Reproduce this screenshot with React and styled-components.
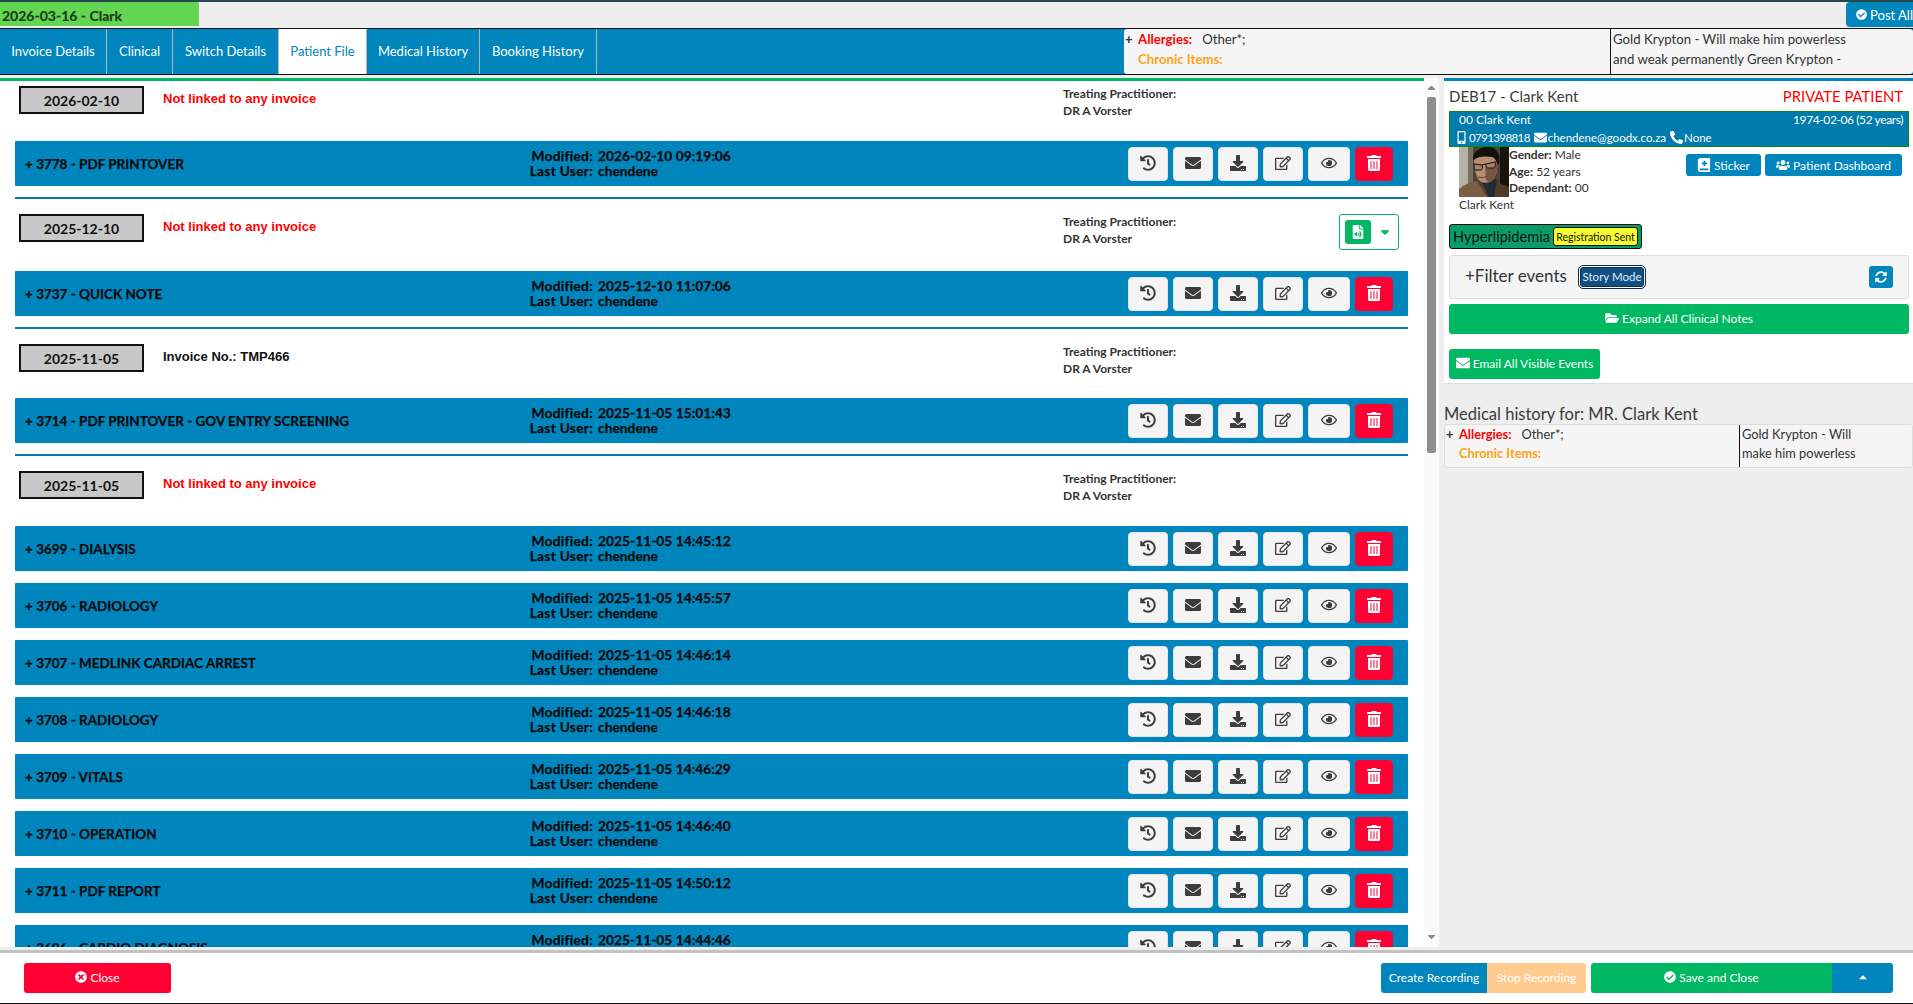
import styled, { createGlobalStyle } from "styled-components";
import {
  FaCaretDown,
  FaCaretUp,
  FaCheckCircle,
  FaBookMedical,
  FaDownload,
  FaEnvelope,
  FaFileAudio,
  FaFolderOpen,
  FaHistory,
  FaMobileAlt,
  FaPhoneAlt,
  FaRegEdit,
  FaRegEye,
  FaSyncAlt,
  FaTimesCircle,
  FaTrashAlt,
  FaUsers,
} from "react-icons/fa";

const BLUE = "#0086bd";
const GREEN = "#00b862";
const RED = "#ff0033";
const BODY_FONT = '"Lato", "Noto Sans", sans-serif';

const GlobalStyle = createGlobalStyle`
  html, body {
    margin: 0;
    padding: 0;
    background: #eeeeee;
    font-family: ${BODY_FONT};
    color: #333;
  }
  * {
    box-sizing: border-box;
  }
`;

const Page = styled.div`
  height: 100vh;
  display: flex;
  flex-direction: column;
  overflow: hidden;
  border-top: 2px solid #25484a;
`;

const TopBar = styled.div`
  height: 26px;
  flex: none;
  display: flex;
  justify-content: space-between;
  background: #eeeeee;
`;

const DateChip = styled.div`
  width: 199px;
  height: 24px;
  background: #62d650;
  color: #1c3a1c;
  font-weight: 700;
  font-size: 14px;
  line-height: 24px;
  padding: 2px 0 0 2px;
  border-top-right-radius: 2px;
  -webkit-text-stroke: 0.2px #1c3a1c;
`;

const PostAll = styled.button`
  width: 67px;
  height: 25px;
  border: 0;
  padding: 0 0 0 10px;
  display: flex;
  align-items: center;
  gap: 3px;
  background: ${BLUE};
  color: #fff;
  font: 400 13px ${BODY_FONT};
  white-space: nowrap;
  overflow: hidden;
  border-top-left-radius: 4px;
  border-bottom-left-radius: 4px;
`;

const TabBar = styled.div`
  height: 47px;
  flex: none;
  display: flex;
  background: ${BLUE};
  border-top: 1px solid #111;
  border-bottom: 1px solid #111;
`;

const Tab = styled.div`
  width: ${(p) => p.$w}px;
  display: flex;
  align-items: center;
  justify-content: center;
  padding-bottom: 2px;
  font-size: 13px;
  color: ${(p) => (p.$active ? BLUE : "#fff")};
  background: ${(p) => (p.$active ? "#fff" : "transparent")};
  border-right: 1px solid #b4b4b4;
`;

const TabSpacer = styled.div`
  flex: 1;
`;

const InfoBox = styled.div`
  display: grid;
  grid-template-columns: ${(p) => (p.$compact ? "294px 1fr" : "486px 1fr")};
  background: #f5f5f5;
  color: #333;
  font-size: ${(p) => (p.$compact ? "12.8px" : "13.2px")};
  line-height: ${(p) => (p.$compact ? "19px" : "20px")};
  border-radius: 3px;
  border: ${(p) => (p.$compact ? "1px solid #ddd" : "0")};
  width: ${(p) => (p.$compact ? "469px" : "789px")};
  height: ${(p) => (p.$compact ? "44px" : "auto")};
`;

const InfoLeft = styled.div`
  padding-left: 1px;
`;

const InfoLine = styled.div`
  display: flex;
  padding-left: ${(p) => (p.$indent ? "13px" : "0")};
`;

const InfoPlus = styled.b`
  width: 12px;
  margin-right: 1px;
`;

const InfoLabel = styled.b`
  color: ${(p) => p.$color};
  font-weight: 700;
`;

const InfoValue = styled.span`
  padding-left: 10px;
`;

const InfoRight = styled.div`
  border-left: 1px solid #111;
  padding-left: 2px;
  white-space: nowrap;
  overflow: hidden;
`;

const Main = styled.div`
  flex: 1;
  min-height: 0;
  display: flex;
  gap: 5px;
  padding-top: 3px;
`;

const FilePanel = styled.div`
  width: 1439px;
  flex: none;
  display: flex;
  background: #fff;
  overflow: hidden;
`;

const FileList = styled.div`
  width: 1424px;
  flex: none;
  padding: 0 16px 0 15px;
  border-top: 3px solid ${GREEN};
  overflow: hidden;
`;

const ScrollTrack = styled.div`
  flex: 1;
  display: flex;
  flex-direction: column;
  align-items: center;
  padding-top: 3px;
  color: #8d8d8d;
  font-size: 13px;
  background: #fafafa;
`;

const ScrollThumb = styled.div`
  width: 9px;
  height: 356px;
  margin-top: 3px;
  border-radius: 2px;
  background: #8d8d8d;
`;

const ScrollDown = styled.div`
  margin-top: auto;
  padding-bottom: 1px;
`;

const SectionHead = styled.div`
  height: ${(p) => p.$h}px;
  padding: ${(p) => p.$top}px 9px 0 4px;
  display: grid;
  grid-template-columns: 125px 1fr 276px 60px;
`;

const DateBox = styled.div`
  width: 125px;
  height: 28px;
  border: 2px solid #111;
  background: #c8c8c8;
  color: #111;
  font-weight: 700;
  font-size: 14px;
  display: flex;
  align-items: center;
  justify-content: center;
`;

const LinkNote = styled.div`
  padding: 5px 0 0 19px;
  font: 700 13px/16px "Liberation Sans", sans-serif;
  color: ${(p) => (p.$linked ? "#111" : "#f00")};
`;

const Practitioner = styled.div`
  font-size: 12px;
  font-weight: 700;
  color: #333;
  line-height: 16.5px;
`;

const AudioButton = styled.div`
  width: 60px;
  height: 36px;
  border: 1px solid ${GREEN};
  border-radius: 3px;
  background: #fff;
  display: flex;
  align-items: center;
  padding-left: 5px;
  gap: 7px;
  color: ${GREEN};
  font-size: 14px;
`;

const AudioIcon = styled.span`
  width: 26px;
  height: 24px;
  border-radius: 3px;
  background: ${GREEN};
  color: #fff;
  display: flex;
  align-items: center;
  justify-content: center;
  font-size: 14px;
`;

const Row = styled.div`
  height: 45px;
  margin-bottom: ${(p) => (p.$last ? "11px" : "12px")};
  padding-right: 15px;
  background: ${BLUE};
  display: grid;
  grid-template-columns: 1fr 430px 265px;
  align-items: center;
  color: #0a0a0a;
  font-weight: 700;
  font-size: 13.5px;
  border-radius: 1px;
  box-shadow: 0 0 1px #bbb;
  -webkit-text-stroke: 0.25px #0a0a0a;
`;

const RowTitle = styled.div`
  padding-left: 10px;
`;

const RowMeta = styled.div`
  display: grid;
  grid-template-columns: 68px auto;
  justify-content: start;
  column-gap: 5px;
  line-height: 15px;
  font-size: 13.8px;
  margin: -2px 0 0 -173px;
`;

const MetaKey = styled.span`
  text-align: right;
  white-space: nowrap;
  letter-spacing: 0.25px;
`;

const RowActions = styled.div`
  display: flex;
  gap: 5px;
`;

const ActionButton = styled.button`
  width: ${(p) => p.$w || 40}px;
  height: 34px;
  padding: 0 0 1px;
  border: 1px solid ${(p) => (p.$danger ? RED : "#e4e4e4")};
  border-radius: 4px;
  background: ${(p) => (p.$danger ? RED : "#f4f4f4")};
  color: ${(p) => (p.$danger ? "#fff" : "#3d3d3d")};
  font-size: 16px;
  display: flex;
  align-items: center;
  justify-content: center;
`;

const Rule = styled.div`
  height: 2px;
  background: #007bad;
`;

const SidePanel = styled.div`
  flex: 1;
  min-width: 0;
`;

const PatientCard = styled.div`
  height: 306px;
  background: #fff;
  border-top: 3px solid ${BLUE};
  padding: 0 4px 0 5px;
  border-bottom: 1px solid #ddd;
`;

const CardHead = styled.div`
  height: 30px;
  padding-top: 5px;
  display: flex;
  justify-content: space-between;
  font-size: 15px;
  line-height: 20px;
  color: #3a3a3a;
  padding-right: 6px;
`;

const PrivateTag = styled.span`
  color: #f00;
  font-size: 14.8px;
`;

const PatientStrip = styled.div`
  height: 36px;
  background: #007bad;
  border: 1px solid #0a8a0a;
  color: #fff;
  font-size: 12px;
  padding: 0 5px;
  display: grid;
  grid-auto-rows: 17px;
  align-content: center;
`;

const StripLine = styled.div`
  display: flex;
  justify-content: space-between;
  padding-left: ${(p) => p.$indent || 0}px;
`;

const StripDate = styled.span`
  letter-spacing: -0.4px;
`;

const Contacts = styled.div`
  display: flex;
  gap: 4px;
  align-items: center;
  white-space: nowrap;
  font-size: 11.5px;

  svg {
    font-size: 13px;
  }
`;

const ContactItem = styled.span`
  display: inline-flex;
  gap: 1px;
  align-items: center;
`;

const PhoneNumber = styled.span`
  letter-spacing: -0.6px;
`;

const PatientBody = styled.div`
  height: 77px;
  display: flex;
  padding-left: 10px;
`;

const PhotoColumn = styled.div`
  width: 50px;
  font-size: 12px;
  white-space: nowrap;
  line-height: 16px;
`;

const PhotoSvg = styled.svg`
  display: block;
  width: 50px;
  height: 50px;
`;

const Demographics = styled.div`
  flex: 1;
  font-size: 12px;
  line-height: 16.5px;
`;

const DemoKey = styled.b`
  font-weight: 700;
`;

const PatientButtons = styled.div`
  display: flex;
  gap: 4px;
  padding: 7px 7px 0 0;
`;

const SmallButton = styled.button`
  height: 22px;
  width: ${(p) => p.$w}px;
  padding: 0;
  border: 0;
  border-radius: 3px;
  background: ${BLUE};
  color: #fff;
  font: 400 12px ${BODY_FONT};
  display: flex;
  align-items: center;
  justify-content: center;
  gap: 3px;

  svg {
    font-size: 14px;
  }
`;

const ConditionBar = styled.div`
  width: 193px;
  height: 25px;
  display: flex;
  align-items: center;
  justify-content: space-between;
  padding: 0 3px;
  background: #0a9c68;
  border: 1px solid #111;
  border-radius: 3px;
  color: #111;
  font-size: 14.6px;
`;

const SentBadge = styled.span`
  width: 85px;
  height: 19px;
  display: flex;
  align-items: center;
  justify-content: center;
  background: #f7fb2e;
  border: 1px solid #111;
  border-radius: 3px;
  font-size: 10.5px;
`;

const FilterBar = styled.div`
  height: 44px;
  margin-top: 6px;
  display: flex;
  align-items: center;
  padding: 0 15px 1px 15px;
  background: #f4f4f4;
  border: 1px solid #ddd;
  border-radius: 3px;
`;

const FilterTitle = styled.div`
  font-size: 17px;
  width: 114px;
  margin-top: -2px;
  color: #333;
`;

const StoryButton = styled.button`
  width: 66px;
  height: 22px;
  padding: 0 0 1px;
  background: #134f82;
  color: #dfeefa;
  font: 400 11.5px ${BODY_FONT};
  border: 1px solid #fff;
  border-radius: 4px;
  outline: 1px solid #0c2f4e;
  box-shadow: inset 0 0 0 1px #0c2f4e;
`;

const RefreshButton = styled.button`
  width: 24px;
  height: 22px;
  margin-left: auto;
  padding: 0;
  border: 0;
  border-radius: 3px;
  background: ${BLUE};
  color: #fff;
  font-size: 12px;
  display: flex;
  align-items: center;
  justify-content: center;
`;

const GreenButton = styled.button`
  width: ${(p) => p.$w}px;
  height: 30px;
  margin-top: ${(p) => p.$top}px;
  padding: 0 0 2px;
  border: 0;
  border-radius: 3px;
  background: ${GREEN};
  color: #fff;
  font: 400 12px ${BODY_FONT};
  display: flex;
  align-items: center;
  justify-content: center;
  gap: 3px;

  svg {
    font-size: 14px;
  }
`;

const HistoryTitle = styled.div`
  height: 40px;
  padding-top: 19px;
  font-size: 16.5px;
  line-height: 22px;
  color: #3a3a3a;
`;

const Footer = styled.div`
  height: 57px;
  flex: none;
  display: flex;
  align-items: center;
  justify-content: space-between;
  padding: 3px 20px 0 24px;
  background: #fff;
  border-top: 3px solid #eeeeee;
  border-bottom: 1px solid #111;
  box-shadow: inset 0 3px 0 #c2c2c2;
`;

const FooterGroup = styled.div`
  display: flex;
`;

const FooterButton = styled.button`
  width: ${(p) => p.$w}px;
  height: 30px;
  margin-left: ${(p) => p.$gap || 0}px;
  padding: 0 0 2px;
  border: 0;
  border-radius: ${(p) => p.$radius || "3px"};
  background: ${(p) => p.$bg};
  color: #fff;
  font: 400 12px ${BODY_FONT};
  display: flex;
  align-items: center;
  justify-content: center;
  gap: 3px;
`;

const tabs = [
  { label: "Invoice Details", w: 107 },
  { label: "Clinical", w: 66 },
  { label: "Switch Details", w: 106 },
  { label: "Patient File", w: 88, active: true },
  { label: "Medical History", w: 113 },
  { label: "Booking History", w: 117 },
];

const sections = [
  {
    date: "2026-02-10",
    h: 60,
    top: 5,
    rows: [["3778 - PDF PRINTOVER", "2026-02-10 09:19:06"]],
  },
  {
    date: "2025-12-10",
    h: 72,
    top: 15,
    audio: true,
    rows: [["3737 - QUICK NOTE", "2025-12-10 11:07:06"]],
  },
  {
    date: "2025-11-05",
    h: 69,
    top: 15,
    invoice: "Invoice No.: TMP466",
    rows: [["3714 - PDF PRINTOVER - GOV ENTRY SCREENING", "2025-11-05 15:01:43"]],
  },
  {
    date: "2025-11-05",
    h: 70,
    top: 15,
    rows: [
      ["3699 - DIALYSIS", "2025-11-05 14:45:12"],
      ["3706 - RADIOLOGY", "2025-11-05 14:45:57"],
      ["3707 - MEDLINK CARDIAC ARREST", "2025-11-05 14:46:14"],
      ["3708 - RADIOLOGY", "2025-11-05 14:46:18"],
      ["3709 - VITALS", "2025-11-05 14:46:29"],
      ["3710 - OPERATION", "2025-11-05 14:46:40"],
      ["3711 - PDF REPORT", "2025-11-05 14:50:12"],
      ["3696 - CARDIO DIAGNOSIS", "2025-11-05 14:44:46"],
    ],
  },
];

const PatientPhoto = () => (
  <PhotoSvg viewBox="0 0 50 50" aria-label="Clark Kent">
    <rect width="50" height="50" fill="#4a4336" />
    <rect width="9" height="50" fill="#b5b3a6" />
    <rect x="9" width="5" height="50" fill="#77705f" />
    <rect x="41" width="9" height="50" fill="#17130f" />
    <path d="M0 50V42c6-5 12-7 18-8l10 16z" fill="#7c5f40" />
    <path d="M40 36l10 4v10H32z" fill="#4e3b28" />
    <path d="M22 33l8 17h5l3-17-8-3z" fill="#232a31" />
    <path d="M15 13c6-6 20-6 23 1 1 9-1 18-7 21-6 2-11 0-13-5-2-6-3-11-3-17z" fill="#b98d72" />
    <path d="M26 20c5 3 9 1 12-4v6c-1 6-3 11-7 13-2 0-3-1-4-2z" fill="#7a5443" />
    <path d="M14 13C13 5 22-1 31 0c7 1 11 8 9 16l-2 2c0-4-2-7-5-8-6-1-14-1-19 3z" fill="#15100d" />
    <path d="M15 17l8 1c1 3 0 5-1 5h-5c-2 0-2-3-2-6zM27 17l9-2c1 3 0 6-2 6h-5c-2 0-2-2-2-4z" fill="#a58470" stroke="#14100d" strokeWidth="1" />
    <path d="M23 18l4-1M36 15l4-1" stroke="#14100d" strokeWidth="1" />
    <path d="M19 30c3 1 6 1 9-1" stroke="#5f3d33" strokeWidth="1" fill="none" />
  </PhotoSvg>
);

const Allergies = ({ compact, notes }) => (
  <InfoBox $compact={compact}>
    <InfoLeft>
      <InfoLine>
        <InfoPlus>+</InfoPlus>
        <InfoLabel $color="#f00">Allergies:</InfoLabel>
        <InfoValue>Other*;</InfoValue>
      </InfoLine>
      <InfoLine $indent>
        <InfoLabel $color="#ffa31a">Chronic Items:</InfoLabel>
      </InfoLine>
    </InfoLeft>
    <InfoRight>
      {notes.map((line) => (
        <div key={line}>{line}</div>
      ))}
    </InfoRight>
  </InfoBox>
);

const FileRow = ({ title, modified, last }) => (
  <Row $last={last}>
    <RowTitle>+ {title}</RowTitle>
    <RowMeta>
      <MetaKey>Modified:</MetaKey>
      <span>{modified}</span>
      <MetaKey>Last User:</MetaKey>
      <span>chendene</span>
    </RowMeta>
    <RowActions>
      <ActionButton>
        <FaHistory />
      </ActionButton>
      <ActionButton>
        <FaEnvelope />
      </ActionButton>
      <ActionButton>
        <FaDownload />
      </ActionButton>
      <ActionButton>
        <FaRegEdit />
      </ActionButton>
      <ActionButton $w={42}>
        <FaRegEye />
      </ActionButton>
      <ActionButton $w={38} $danger>
        <FaTrashAlt />
      </ActionButton>
    </RowActions>
  </Row>
);

const Section = ({ section, showRule }) => (
  <>
    <SectionHead $h={section.h} $top={section.top}>
      <DateBox>{section.date}</DateBox>
      <LinkNote $linked={!!section.invoice}>
        {section.invoice || "Not linked to any invoice"}
      </LinkNote>
      <Practitioner>
        Treating Practitioner:
        <br />
        DR A Vorster
      </Practitioner>
      {section.audio && (
        <AudioButton>
          <AudioIcon>
            <FaFileAudio />
          </AudioIcon>
          <FaCaretDown />
        </AudioButton>
      )}
    </SectionHead>
    {section.rows.map(([title, modified]) => (
      <FileRow key={title} title={title} modified={modified} last={showRule} />
    ))}
    {showRule && <Rule />}
  </>
);

export default function App() {
  return (
    <Page>
      <GlobalStyle />
      <TopBar>
        <DateChip>2026-03-16 - Clark</DateChip>
        <PostAll>
          <FaCheckCircle /> Post All
        </PostAll>
      </TopBar>
      <TabBar>
        {tabs.map((tab) => (
          <Tab key={tab.label} $w={tab.w} $active={tab.active}>
            {tab.label}
          </Tab>
        ))}
        <TabSpacer />
        <Allergies
          notes={[
            "Gold Krypton - Will make him powerless",
            "and weak permanently Green Krypton -",
          ]}
        />
      </TabBar>
      <Main>
        <FilePanel>
          <FileList>
            {sections.map((section, i) => (
              <Section
                key={section.rows[0][0]}
                section={section}
                showRule={i < sections.length - 1}
              />
            ))}
          </FileList>
          <ScrollTrack>
            <FaCaretUp />
            <ScrollThumb />
            <ScrollDown>
              <FaCaretDown />
            </ScrollDown>
          </ScrollTrack>
        </FilePanel>
        <SidePanel>
          <PatientCard>
            <CardHead>
              <span>DEB17 - Clark Kent</span>
              <PrivateTag>PRIVATE PATIENT</PrivateTag>
            </CardHead>
            <PatientStrip>
              <StripLine $indent={4}>
                <span>00 Clark Kent</span>
                <StripDate>1974-02-06 (52 years)</StripDate>
              </StripLine>
              <Contacts>
                <ContactItem>
                  <FaMobileAlt /> <PhoneNumber>0791398818</PhoneNumber>
                </ContactItem>
                <ContactItem>
                  <FaEnvelope /> chendene@goodx.co.za
                </ContactItem>
                <ContactItem>
                  <FaPhoneAlt /> None
                </ContactItem>
              </Contacts>
            </PatientStrip>
            <PatientBody>
              <PhotoColumn>
                <PatientPhoto />
                Clark Kent
              </PhotoColumn>
              <Demographics>
                <div>
                  <DemoKey>Gender:</DemoKey> Male
                </div>
                <div>
                  <DemoKey>Age:</DemoKey> 52 years
                </div>
                <div>
                  <DemoKey>Dependant:</DemoKey> 00
                </div>
              </Demographics>
              <PatientButtons>
                <SmallButton $w={75}>
                  <FaBookMedical /> Sticker
                </SmallButton>
                <SmallButton $w={137}>
                  <FaUsers /> Patient Dashboard
                </SmallButton>
              </PatientButtons>
            </PatientBody>
            <ConditionBar>
              Hyperlipidemia
              <SentBadge>Registration Sent</SentBadge>
            </ConditionBar>
            <FilterBar>
              <FilterTitle>+Filter events</FilterTitle>
              <StoryButton>Story Mode</StoryButton>
              <RefreshButton>
                <FaSyncAlt />
              </RefreshButton>
            </FilterBar>
            <GreenButton $w={460} $top={5}>
              <FaFolderOpen /> Expand All Clinical Notes
            </GreenButton>
            <GreenButton $w={151} $top={15}>
              <FaEnvelope /> Email All Visible Events
            </GreenButton>
          </PatientCard>
          <HistoryTitle>Medical history for: MR. Clark Kent</HistoryTitle>
          <Allergies compact notes={["Gold Krypton - Will", "make him powerless"]} />
        </SidePanel>
      </Main>
      <Footer>
        <FooterButton $w={147} $bg={RED}>
          <FaTimesCircle /> Close
        </FooterButton>
        <FooterGroup>
          <FooterButton $w={106} $bg={BLUE} $radius="3px 0 0 3px">
            Create Recording
          </FooterButton>
          <FooterButton $w={99} $bg="#ffcb8f" $radius="0 3px 3px 0">
            Stop Recording
          </FooterButton>
          <FooterButton $w={241} $gap={5} $bg={GREEN} $radius="3px 0 0 3px">
            <FaCheckCircle /> Save and Close
          </FooterButton>
          <FooterButton $w={61} $bg={BLUE} $radius="0 3px 3px 0">
            <FaCaretUp />
          </FooterButton>
        </FooterGroup>
      </Footer>
    </Page>
  );
}
